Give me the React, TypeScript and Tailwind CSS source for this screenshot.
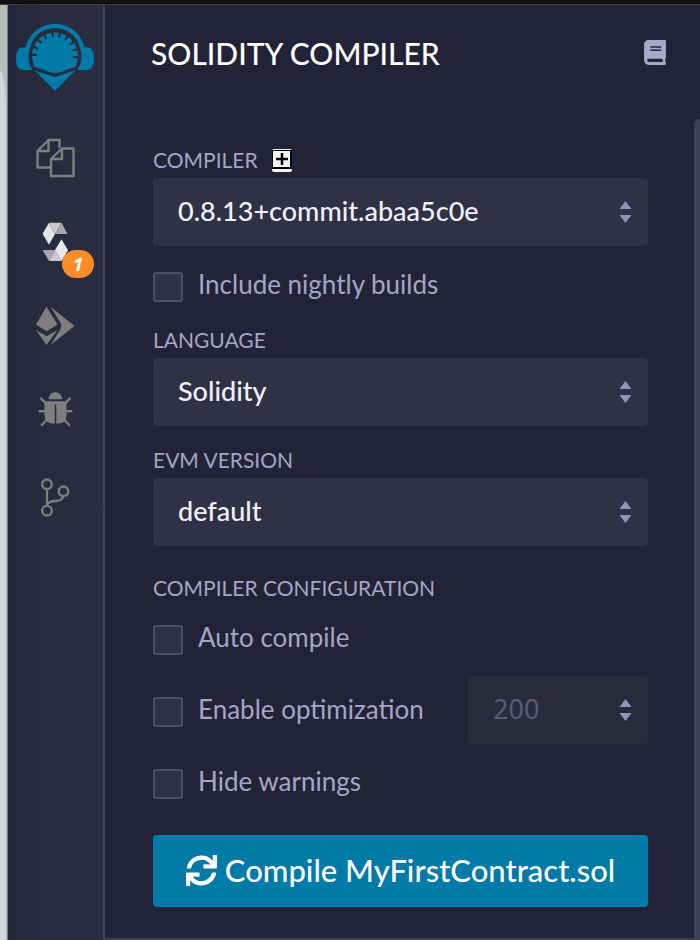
import { useId, type ReactNode } from "react";
import { FaBook, FaSync } from "react-icons/fa";

function Logo() {
  return (
    <svg viewBox="48 69 234 204" className="h-[68px] w-[78px]" aria-hidden="true">
      <g fill="#007aa6">
        <path d="M82 152 A83.500 83.500 0 0 1 248 152" fill="none" stroke="#007aa6" strokeWidth="13" />
        <path d="M90 142 H68 Q48 143 48 176 Q48 210 69 210 H98 Q77 180 90 142Z" />
        <path d="M240 142 H262 Q282 143 282 176 Q282 210 261 210 H232 Q253 180 240 142Z" />
        <circle cx="165" cy="165" r="54" />
        <path d="M98 181 L102 200 L165 219 L228 200 L232 181 L165 168Z" />
        {/* shell ridges */}
        <path
          d="M107 182 A60 60 0 1 1 223 182"
          fill="none"
          stroke="#007aa6"
          strokeWidth="18"
          strokeDasharray="14.500 6.500"
        />
        <path d="M105 212 L165 231 L226 211 L165 273Z" />
      </g>
    </svg>
  );
}

function FilesIcon() {
  return (
    <svg viewBox="0 0 40 40" className="size-10" fill="none" stroke="#7f7f7f" strokeWidth="2.400" strokeLinejoin="round">
      <path d="M24.500 10 V2 H13.500 L2.500 13 V29.500 H15.500 M13.500 2 V13 H2.500" />
      <path d="M27 10.500 H38.500 V38 H16 V21Z M27 10.500 V21 H16" />
    </svg>
  );
}

function SolidityIcon() {
  return (
    <svg viewBox="0 0 40 40" className="size-10">
      <path d="M14 .7 L20 12 L14 22.700 L7.500 11.700Z" fill="#e2e2e4" />
      <path d="M14 .7 H26.500 L20 12Z" fill="#c9cacf" />
      <path d="M26.500 .7 L32.500 12 H20Z" fill="#a6a7ae" />
      <path d="M7.500 28 H20 L14 39Z" fill="#a6a7ae" />
      <path d="M20 28 L26.500 39 H14Z" fill="#c9cacf" />
      <path d="M26.500 17.300 L33 28.300 L26.500 39 L20 28Z" fill="#e8e8ea" />
    </svg>
  );
}

function DeployIcon() {
  return (
    <svg viewBox="0 0 40 40" className="size-10" fill="#7f7f7f">
      <path d="M11.500 .7 L22.500 18.500 L11.500 25.300 L1 18.500Z" />
      <path d="M1 24 L11.500 30.300 L22.500 24 L11.500 39Z" />
      <path d="M15.500 .7 L39.500 20 L15.500 39 L25 24 Q27.500 20 25 16Z" />
    </svg>
  );
}

function BugIcon() {
  return (
    <svg viewBox="0 0 40 40" className="size-10" fill="#7f7f7f">
      <path d="M13.700 9.300 A6.700 7 0 0 1 27.100 9.300Z" />
      <path d="M9.500 11.300 H31.500 V25 Q31.500 33.700 21.300 33.700 V14.500 H19.700 V33.700 Q9.500 33.700 9.500 25Z" />
      <path
        d="M6 8.500 L10.500 13 M34.800 8.500 L30.500 13 M4.500 21.300 H9 M31 21.300 H36.300 M6.800 35 L12 29.500 M34 35 L29 29.500"
        stroke="#7f7f7f"
        strokeWidth="2.400"
        strokeLinecap="round"
      />
    </svg>
  );
}

function GitIcon() {
  return (
    <svg viewBox="0 0 40 40" className="size-10" fill="none" stroke="#7f7f7f" strokeWidth="2.300">
      <circle cx="12" cy="6.300" r="4.800" />
      <circle cx="28.500" cy="13.300" r="4.800" />
      <circle cx="12" cy="32.700" r="4.800" />
      <path d="M12 11 V28 M28.500 18 Q27 23 20.500 23 Q13.500 23 12 27" />
    </svg>
  );
}

function NavButton({ label, className = "", children }: { label: string; className?: string; children: ReactNode }) {
  return (
    <button type="button" aria-label={label} className={`relative size-10 ${className}`}>
      {children}
    </button>
  );
}

function Arrows() {
  return (
    <svg
      viewBox="0 0 12 22"
      aria-hidden="true"
      className="pointer-events-none absolute inset-y-0 right-4 my-auto h-[22px] w-[13px]"
      fill="#8f94b8"
    >
      <path d="M6 0 L12 8 H0Z M0 14 H12 L6 22Z" />
    </svg>
  );
}

const fieldLabel = "flex h-7 items-center text-[21px] leading-7 text-[#a5a5c8]";

function SelectField({
  label,
  value,
  action,
  className = "",
}: {
  label: string;
  value: string;
  action?: ReactNode;
  className?: string;
}) {
  const id = useId();
  return (
    <div className={className}>
      <div className="mb-1 flex items-center gap-3.5">
        <label htmlFor={id} className={fieldLabel}>
          {label}
        </label>
        {action}
      </div>
      <div className="relative">
        <select
          id={id}
          className="h-[68px] w-full appearance-none rounded bg-[#2f3144] pr-12 pb-0.5 pl-[25px] text-[27px] font-medium text-[#f0f0f8]"
        >
          <option>{value}</option>
        </select>
        <Arrows />
      </div>
    </div>
  );
}

function CheckField({ label, className = "" }: { label: string; className?: string }) {
  const id = useId();
  return (
    <div className={`flex items-start gap-[15px] ${className}`}>
      <input
        id={id}
        type="checkbox"
        className="size-[30px] shrink-0 appearance-none rounded-[3px] border-2 border-[#4f4e6a] bg-[#2f3144]"
      />
      <label htmlFor={id} className="text-[26px] leading-6 text-[#a5a5c8]">
        {label}
      </label>
    </div>
  );
}

export default function App() {
  return (
    <div className="flex min-h-screen flex-col bg-[#222336] font-['Lato',sans-serif]">
      <div className="h-[5px] border-b border-[#3d3d3b] bg-[#111111]" />
      <div className="flex flex-1">
        {/* edge of the window behind */}
        <div className="flex w-2 flex-col border-r border-[#7c7e7c] bg-[#b9baba]">
          <div className="mt-[66px] mr-px flex-1 rounded-tr-[6px_40px] bg-[#d3d5d7]" />
        </div>

        <nav className="flex w-[97px] flex-col items-center gap-11 border-r-2 border-[#43445a] bg-linear-to-r from-[#26283a] to-[#2b2e42] pt-[18px] pr-px">
          <a href="#home" aria-label="Home" className="mb-[3px]">
            <Logo />
          </a>
          <NavButton label="File explorers">
            <FilesIcon />
          </NavButton>
          <NavButton label="Solidity compiler">
            <SolidityIcon />
            <span className="absolute top-7 left-[27px] flex h-7 w-8 items-center justify-center rounded-full bg-[#fd8c2b] font-['Noto_Sans',sans-serif] text-lg font-bold text-white italic">
              1
            </span>
          </NavButton>
          <NavButton label="Deploy and run transactions">
            <DeployIcon />
          </NavButton>
          <NavButton label="Debugger">
            <BugIcon />
          </NavButton>
          <NavButton label="Git" className="mt-1">
            <GitIcon />
          </NavButton>
        </nav>

        <main className="flex min-w-0 flex-1 flex-col">
          <header className="flex h-[114px] items-start justify-between pt-7 pr-[34px] pl-[46px]">
            <h1 className="text-[30px] leading-10 font-medium text-white">SOLIDITY COMPILER</h1>
            <button type="button" aria-label="Documentation" className="mt-[7px] text-[#a9a8cb]">
              <FaBook className="h-[25px] w-[22px]" />
            </button>
          </header>

          <div className="flex flex-1">
            <form className="min-w-0 flex-1 border-b-2 border-[#3c3d52] pt-[27px] pr-[46px] pb-7 pl-12">
              <SelectField
                label="COMPILER"
                value="0.8.13+commit.abaa5c0e"
                action={
                  <button type="button" aria-label="Add custom compiler">
                    <svg viewBox="0 0 20 24" className="h-6 w-5">
                      <rect y="1" width="20" height="23" rx="2" fill="#f4f4f4" />
                      <path d="M0 2 H20 V21 H0Z" fill="#000" />
                      <path d="M1 3 H18 V19 H1Z" fill="#f4f4f4" />
                      <path d="M10 5 V17 M4 11 H16" stroke="#000" strokeWidth="2.500" />
                    </svg>
                  </button>
                }
              />
              <CheckField label="Include nightly builds" className="mt-[26px]" />
              <SelectField label="LANGUAGE" value="Solidity" className="mt-6" />
              <SelectField label="EVM VERSION" value="default" className="mt-5" />

              <fieldset className="mt-7">
                <legend className={fieldLabel}>COMPILER CONFIGURATION</legend>
                <CheckField label="Auto compile" className="mt-[23px]" />
                <div className="mt-[21px] flex items-center justify-between">
                  <CheckField label="Enable optimization" className="mt-1" />
                  <div className="relative">
                    <input
                      type="text"
                      aria-label="Optimization runs"
                      defaultValue="200"
                      disabled
                      className="h-[68px] w-[180px] rounded bg-[#292b3d] pb-1 pl-[25px] font-['Noto_Sans',sans-serif] text-[27px] text-[#5a5a70]"
                    />
                    <Arrows />
                  </div>
                </div>
                <CheckField label="Hide warnings" className="mt-[25px]" />
              </fieldset>

              <button
                type="button"
                className="mt-9 flex h-[72px] w-full items-center justify-center gap-2 rounded bg-[#007aa6] pb-0.5 text-[31px] font-medium text-white"
              >
                <FaSync className="size-[31px]" />
                Compile MyFirstContract.sol
              </button>
            </form>
            <div className="w-1.5 rounded-tl-md bg-[#3f4159]" />
          </div>
        </main>
      </div>
    </div>
  );
}
